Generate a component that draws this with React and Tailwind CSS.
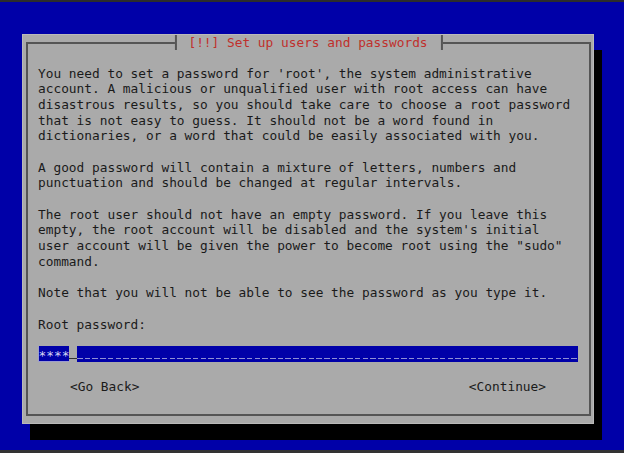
export default function App() {
  const mono = { fontFamily: '"DejaVu Sans Mono", "Liberation Mono", monospace' };
  const lines = [
    "You need to set a password for 'root', the system administrative",
    "account. A malicious or unqualified user with root access can have",
    "disastrous results, so you should take care to choose a root password",
    "that is not easy to guess. It should not be a word found in",
    "dictionaries, or a word that could be easily associated with you.",
    "",
    "A good password will contain a mixture of letters, numbers and",
    "punctuation and should be changed at regular intervals.",
    "",
    "The root user should not have an empty password. If you leave this",
    "empty, the root account will be disabled and the system's initial",
    'user account will be given the power to become root using the "sudo"',
    "command.",
    "",
    "Note that you will not be able to see the password as you type it.",
    "",
    "Root password:",
  ];
  return (
    <div className="w-[624px] h-[453px] flex flex-col overflow-hidden" style={mono}>
      <div className="h-[2px] bg-[#2c2c2c]" />
      <div className="flex-1 bg-[#0000a8] pt-[32px] pl-[22px]">
        <div className="w-[572px] h-[390px] bg-[#aaaaaa] border border-[#bababa] shadow-[8px_16px_0_0_#000] pt-[7px] pl-[3px] pr-[2px] pb-[7px] flex flex-col">
          <div className="relative flex-1 border-2 border-[#555555] pl-[10px] pt-[21.5px] text-[12.82px] leading-[15.7px] text-[#1a1a1a]">
            <div className="absolute left-1/2 -translate-x-1/2 top-[-9px] h-[15px] flex items-center bg-[#aaaaaa]">
              <div className="w-[2px] h-full bg-[#555555]" />
              <span className="ml-[12px] mr-[13px] text-[#c0302c] whitespace-pre">[!!] Set up users and passwords</span>
              <div className="w-[2px] h-full bg-[#555555]" />
            </div>
            {lines.map((l, i) => (
              <div key={i} className="whitespace-pre h-[15.7px]">{l}</div>
            ))}
            <div className="mt-[13.5px] w-[540px] h-[16px] flex bg-[#0000a8]">
              <div className="w-[31px] h-full flex items-center justify-center text-[#d4d4f4] text-[12.82px] leading-none border-b border-l border-[#9c9cd0] overflow-hidden whitespace-pre">
                <span className="translate-y-[3px]">****</span>
              </div>
              <div className="w-[8px] h-full bg-[#aaaaaa] flex items-end pb-[3px]">
                <div className="w-full h-[1px] bg-[#333]" />
              </div>
              <div className="flex-1 h-full flex items-end pb-[3px]">
                <div className="w-full h-[1px] bg-[repeating-linear-gradient(90deg,#8f8fd6_0_5.5px,transparent_5.5px_7.72px)]" />
              </div>
            </div>
            <div className="mt-[17px] w-[540px] flex justify-between px-[32px] whitespace-pre">
              <span>{"<Go Back>"}</span>
              <span>{"<Continue>"}</span>
            </div>
          </div>
        </div>
      </div>
      <div className="h-[3px] bg-[#333333]" />
    </div>
  );
}
